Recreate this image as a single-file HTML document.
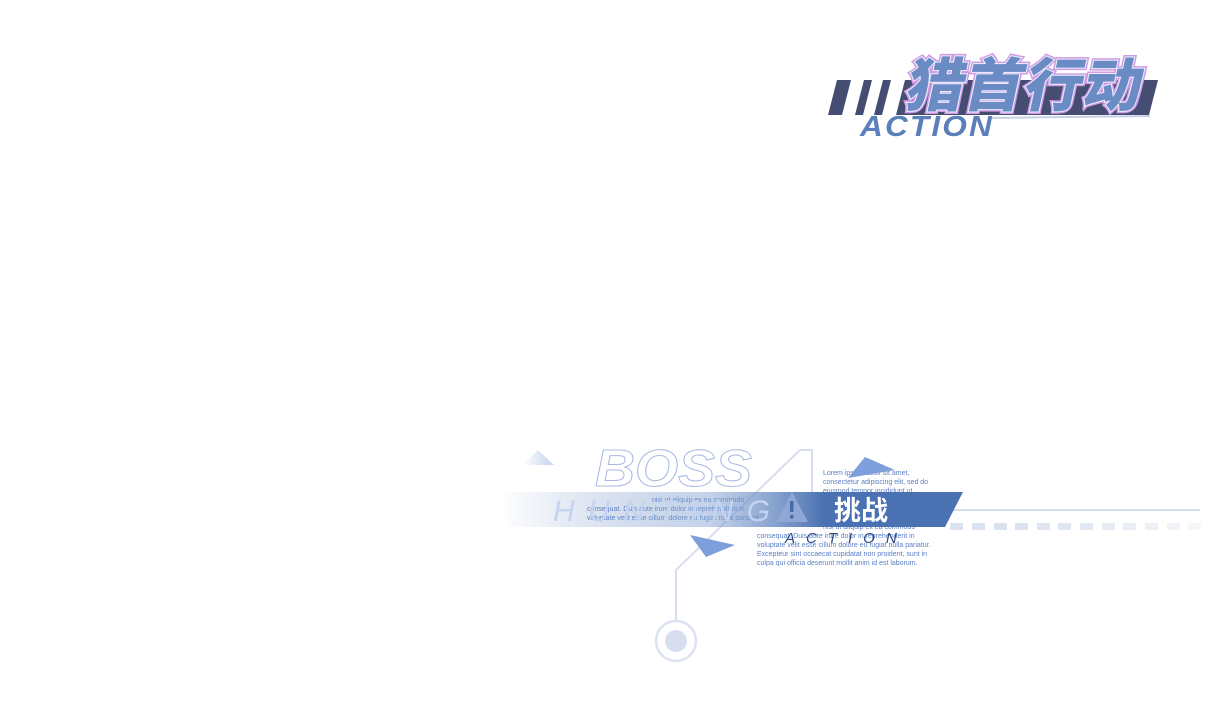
<!DOCTYPE html>
<html><head><meta charset="utf-8"><style>
html,body{margin:0;padding:0;background:#fff;width:1210px;height:720px;overflow:hidden}
svg{display:block}
</style></head><body>
<svg width="1210" height="720" viewBox="0 0 1210 720" xmlns="http://www.w3.org/2000/svg">
<defs>
<linearGradient id="band" x1="0" x2="1" y1="0" y2="0">
<stop offset="0" stop-color="#4a72b2" stop-opacity="0"/>
<stop offset="0.45" stop-color="#8aa6d4" stop-opacity="0.5"/>
<stop offset="0.7" stop-color="#4a72b2"/>
<stop offset="1" stop-color="#4a72b2"/>
</linearGradient>
<linearGradient id="lg" x1="0" x2="1"><stop offset="0" stop-color="#c8d4ea"/><stop offset="1" stop-color="#eef2f9"/></linearGradient>
<linearGradient id="tri1" x1="0" x2="1"><stop offset="0" stop-color="#ffffff"/><stop offset="1" stop-color="#c3d2ec"/></linearGradient>
<linearGradient id="al" x1="0" x2="1"><stop offset="0" stop-color="#fff"/><stop offset="1" stop-color="#6a88bf"/></linearGradient>
</defs>

<!-- Logo -->
<polygon points="837,80 851,80 842,115 828,115" fill="#454e72"/>
<polygon points="864,80 872,80 863,115 855,115" fill="#454e72"/>
<polygon points="883,80 891,80 882,115 874,115" fill="#454e72"/>
<polygon points="905,80 1158,80 1149,115 896,115" fill="#454e72"/>
<line x1="802" y1="134" x2="870" y2="134" stroke="url(#al)" stroke-width="2"/>
<line x1="990" y1="118" x2="1150" y2="116" stroke="#c5d0e6" stroke-width="2"/>
<text x="860" y="136" font-family="Liberation Sans,sans-serif" font-weight="bold" font-style="italic" font-size="29" fill="#5b7fba" letter-spacing="2" textLength="134" lengthAdjust="spacingAndGlyphs">ACTION</text>
<g transform="translate(905,106) skewX(-12)">
<text x="-2" y="0" font-family="Liberation Sans,'Noto Sans CJK SC',sans-serif" font-weight="900" font-size="58" fill="#6a8bc4" stroke="#d19be3" stroke-width="5" paint-order="stroke" textLength="236" lengthAdjust="spacingAndGlyphs">猎首行动</text>
<text x="-2" y="0" font-family="Liberation Sans,'Noto Sans CJK SC',sans-serif" font-weight="900" font-size="58" fill="#6a8bc4" stroke="#eef0ff" stroke-width="2" paint-order="stroke" textLength="236" lengthAdjust="spacingAndGlyphs">猎首行动</text>
</g>

<!-- bottom graphic lines -->
<polygon points="522,465 538,450 554,465" fill="url(#tri1)"/>
<line x1="1004" y1="464" x2="1200" y2="464" stroke="url(#lg)" stroke-width="3"/>
<polyline points="800,450 812,450 812,510 1200,510" fill="none" stroke="#d6deee" stroke-width="2"/>
<polyline points="800,450 676,570 676,622" fill="none" stroke="#d6deee" stroke-width="2"/>
<circle cx="676" cy="641" r="20" fill="none" stroke="#dbe3f1" stroke-width="2.5"/>
<circle cx="676" cy="641" r="11" fill="#d6def0"/>
<g fill="#dbe2f0">
<rect x="950" y="523" width="13" height="7"/><rect x="972" y="523" width="13" height="7"/><rect x="994" y="523" width="13" height="7"/><rect x="1015" y="523" width="13" height="7"/><rect x="1037" y="523" width="13" height="7" opacity=".9"/><rect x="1058" y="523" width="13" height="7" opacity=".85"/><rect x="1080" y="523" width="13" height="7" opacity=".8"/><rect x="1102" y="523" width="13" height="7" opacity=".7"/><rect x="1123" y="523" width="13" height="7" opacity=".6"/><rect x="1145" y="523" width="13" height="7" opacity=".5"/><rect x="1167" y="523" width="13" height="7" opacity=".4"/><rect x="1188" y="523" width="13" height="7" opacity=".3"/>
</g>

<!-- BOSS outline -->
<text x="595" y="486" font-family="Liberation Sans,sans-serif" font-weight="bold" font-style="italic" font-size="52" fill="#fff" stroke="#a9b9e2" stroke-width="1" textLength="157" lengthAdjust="spacingAndGlyphs">BOSS</text>

<!-- small lorem text -->
<g font-family="Liberation Sans,sans-serif" font-size="7" fill="#5a7fc5">
<text x="823" y="475">Lorem ipsum dolor sit amet,</text>
<text x="823" y="484">consectetur adipiscing elit, sed do</text>
<text x="823" y="493">eiusmod tempor incididunt ut</text>
<text x="823" y="502">labore et dolore magna aliqua. Ut</text>
<text x="823" y="511">enim ad minim veniam, quis</text>
<text x="823" y="520">nostrud exercitation ullamco laboris</text>
<text x="823" y="529">nisi ut aliquip ex ea commodo</text>
<text x="757" y="538">consequat. Duis aute irure dolor in reprehenderit in</text>
<text x="757" y="547">voluptate velit esse cillum dolore eu fugiat nulla pariatur.</text>
<text x="757" y="556">Excepteur sint occaecat cupidatat non proident, sunt in</text>
<text x="757" y="565">culpa qui officia deserunt mollit anim id est laborum.</text>
<text x="652" y="502">nisi ut aliquip ex ea commodo</text>
<text x="587" y="511">consequat. Duis aute irure dolor in reprehenderit in</text>
<text x="587" y="520">voluptate velit esse cillum dolore eu fugiat nulla pariatur.</text>
</g>

<!-- band -->
<polygon points="500,492 963,492 945,527 500,527" fill="url(#band)"/>
<text x="553" y="521" font-family="Liberation Sans,sans-serif" font-style="italic" font-size="30" fill="#c4d3f2" textLength="217" lengthAdjust="spacing">HUNTING</text>
<polygon points="792,492 808,522 776,522" fill="#8ea7d6"/>
<rect x="790" y="501" width="3.5" height="11" fill="#4a6aa8"/><rect x="790" y="515" width="3.5" height="3.5" fill="#4a6aa8"/>
<text x="834" y="520" font-family="Liberation Sans,'Noto Sans CJK SC',sans-serif" font-weight="bold" font-size="27" fill="#fff">挑战</text>
<text x="785" y="543" font-family="Liberation Sans,sans-serif" font-style="italic" font-size="15" fill="#2f4a80" letter-spacing="11">ACTION</text>

<!-- triangles -->
<polygon points="848,478 865,457 895,470" fill="#7da0dc"/>
<polygon points="690,535 735,545 706,557" fill="#7da0dc"/>
</svg>
</body></html>
